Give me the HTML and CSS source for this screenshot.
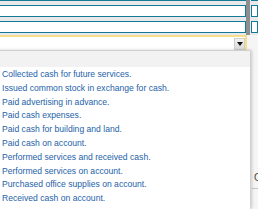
FILE: index.html
```html
<!DOCTYPE html>
<html lang="en">
<head>
    <meta charset="UTF-8">
    <meta name="viewport" content="width=device-width, initial-scale=1.0">
    <title>Journal Entry - Transaction</title>
    <link rel="stylesheet" href="styles.css">
</head>
<body>
    <div class="page">
        <div class="fields">
            <div class="col col-left">
                <div class="input"></div>
                <div class="input"></div>
                <div class="input"></div>
            </div>
            <div class="divider"></div>
            <div class="col col-right">
                <div class="input"></div>
                <div class="input"></div>
                <div class="input"></div>
            </div>
        </div>

        <div class="select-row">
            <div class="select">
                <span class="select-btn"><span class="arrow"></span></span>
            </div>
        </div>

        <div class="below">
            <div class="side-label">Cash</div>
        </div>

        <!-- open dropdown list, drawn over the page -->
        <ul class="options">
            <li class="option option-empty"></li>
            <li class="option">Collected cash for future services.</li>
            <li class="option">Issued common stock in exchange for cash.</li>
            <li class="option">Paid advertising in advance.</li>
            <li class="option">Paid cash expenses.</li>
            <li class="option">Paid cash for building and land.</li>
            <li class="option">Paid cash on account.</li>
            <li class="option">Performed services and received cash.</li>
            <li class="option">Performed services on account.</li>
            <li class="option">Purchased office supplies on account.</li>
            <li class="option">Received cash on account.</li>
        </ul>
    </div>
</body>
</html>
```

FILE: styles.css
```css
html, body {
    margin: 0;
    padding: 0;
    width: 258px;
    height: 209px;
    overflow: hidden;
    background: #f5f5f5;
    font-family: 'Liberation Sans', Arial, sans-serif;
}

.page {
    position: relative;
    width: 288px;
    margin: -11px 0 0 -30px;
}

.fields {
    display: flex;
    background: #e9e9e9;
}

.col {
    display: flex;
    flex-direction: column;
    gap: 4px;
    padding-bottom: 2px;
}

.col-left {
    width: 276px;
}

.col-right {
    flex: 1;
}

.divider {
    width: 4px;
    margin-right: 1px;
    background: #8e8e8e;
}

.input {
    height: 12px;
    box-sizing: border-box;
    border: 1px solid #127a98;
    background: #fff;
}

.select-row {
    display: flex;
}

.select {
    width: 277px;
    height: 15px;
    box-sizing: border-box;
    border-top: 2px solid #f6de8c;
    border-right: 2px solid #f6de8c;
    background: #fff;
    display: flex;
    justify-content: flex-end;
    padding-top: 1px;
}

.select-btn {
    width: 11px;
    height: 12px;
    box-sizing: border-box;
    border: 1px solid #cfcfcf;
    background: linear-gradient(#f2f2f2, #d9d9d9);
    display: flex;
    align-items: center;
    justify-content: center;
}

.arrow {
    width: 0;
    height: 0;
    border-left: 3px solid transparent;
    border-right: 3px solid transparent;
    border-top: 4px solid #111;
}

.below {
    height: 159px;
    padding: 122px 0 0 282px;
    box-sizing: border-box;
}

.side-label {
    font-size: 10px;
    line-height: 12px;
    color: #444;
    padding: 0 0 4px 2px;
    border-bottom: 1px solid #c6c6d6;
    white-space: nowrap;
    overflow: hidden;
}

.options {
    position: absolute;
    top: 61px;
    left: 0;
    width: 280px;
    height: 159px;
    margin: 0;
    padding: 0;
    list-style: none;
    overflow: hidden;
    background: #fff;
    border-top: 1px solid #cfcfcf;
    box-sizing: border-box;
    box-shadow: 2px 0 3px rgba(0, 0, 0, 0.18);
}

.option {
    padding-left: 32px;
    font-size: 8.6px;
    line-height: 13.8px;
    color: #2462a8;
    white-space: nowrap;
}

.option-empty {
    height: 16px;
    background: #f2f2f2;
    margin-bottom: 1px;
}
```
